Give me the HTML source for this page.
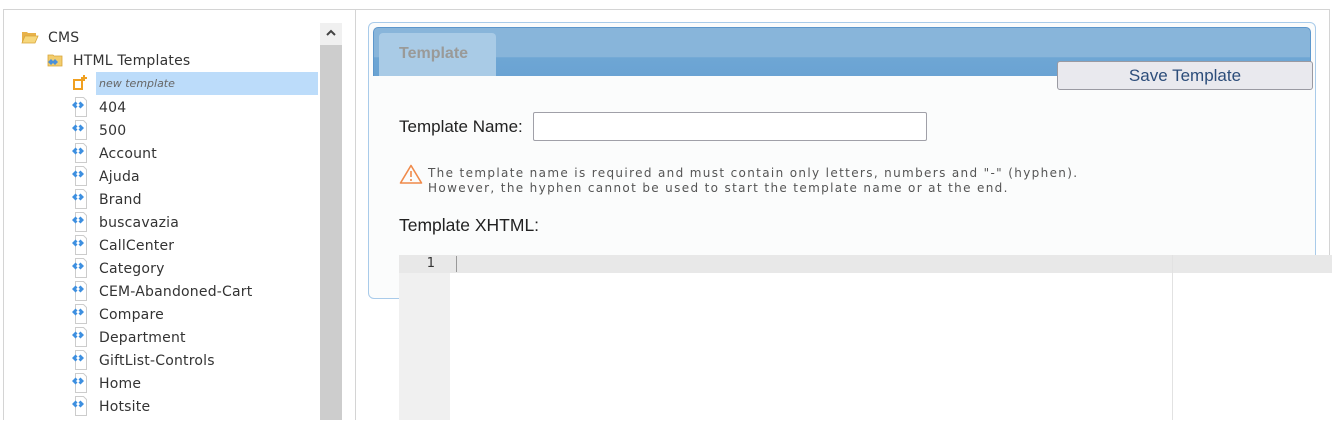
<!DOCTYPE html>
<html><head><meta charset="utf-8"><style>
*{margin:0;padding:0;box-sizing:border-box}
body{width:1340px;height:438px;background:#fff;position:relative;overflow:hidden;font-family:"DejaVu Sans","Liberation Sans",sans-serif}
.a{position:absolute}
.tree div{position:absolute;font-size:14px;letter-spacing:.2px;color:#333;height:23px;line-height:23px;white-space:nowrap}
</style></head><body>
<div class="a" style="left:3px;top:9px;width:1327px;height:411px;border:1px solid #d4d4d4;border-bottom:none"></div>
<div class="a" style="left:355px;top:9px;width:1px;height:411px;background:#d4d4d4"></div>
<div class="a" style="left:320px;top:23px;width:22px;height:397px;background:#cdcdcd"></div>
<div class="a" style="left:320px;top:23px;width:22px;height:22px;background:#f0f0f0"></div>
<svg class="a" style="left:325px;top:28px" width="12" height="10" viewBox="0 0 12 10"><path d="M2 7l4-4 4 4" fill="none" stroke="#444" stroke-width="2"/></svg>
<div class="a" style="left:4px;top:10px;width:316px;height:409px;overflow:hidden">
<div class="a" style="left:-4px;top:-10px;width:340px;height:440px">
<div class="tree">
<svg class="a" style="left:21px;top:30px" width="18" height="14" viewBox="0 0 18 14"><path d="M1 2h5l1 1h8v3H4L1 13z" fill="#e8b24a"/><path d="M4 6h13l-3 7H1z" fill="#f6d77c" stroke="#d9a53a" stroke-width=".8"/></svg>
<div style="left:48px;top:27px">CMS</div>
<svg class="a" style="left:46px;top:53px" width="18" height="15" viewBox="0 0 18 15"><path d="M2 2h5l1 1h8v10H2z" fill="#f2cd6e" stroke="#d9a53a" stroke-width=".8"/><path d="M2 9l3-3 3 3-3 3zM6 9l3-3 3 3-3 3z" fill="#4a90d9"/></svg>
<div style="left:73px;top:50px">HTML Templates</div>
<svg class="a" style="left:72px;top:75px" width="16" height="16" viewBox="0 0 16 16"><path d="M2 5h8v9H2z" fill="none" stroke="#f0a020" stroke-width="2"/><path d="M12 0v6M9 3h6" stroke="#f0a020" stroke-width="2"/></svg>
<div style="left:96px;top:72px;width:222px;background:#bcdcfa;font-style:italic;font-size:11px;letter-spacing:0;color:#666;padding-left:3px">new template</div>
</div>
<div class="tree" id="t"></div>
</div></div>
<script>
var n=["404","500","Account","Ajuda","Brand","buscavazia","CallCenter","Category","CEM-Abandoned-Cart","Compare","Department","GiftList-Controls","Home","Hotsite",""];
var h="";n.forEach(function(s,i){var y=108+i*23;
h+='<svg class="a" width="18" height="20" style="left:71px;top:'+(y-11)+'px" viewBox="0 0 18 20"><path d="M4.5 .5h8l3 3v16h-11z" fill="#fff" stroke="#ccc"/><path d="M1 8l3.5-3.5 2 2L5 8l1.5 1.5-2 2zM13 8l-3.5-3.5-2 2L9 8l-1.5 1.5 2 2z" fill="#3d8fe0"/></svg>';
if(s)h+='<div style="left:99px;top:'+(y-11)+'px">'+s+'</div>';});
document.getElementById('t').innerHTML=h;
</script>
<div class="a" style="left:368px;top:22px;width:948px;height:277px;border:1px solid #a9cbea;border-radius:6px;background:#fbfcfc"></div>
<div class="a" style="left:373px;top:27px;width:938px;height:49px;border-radius:5px 5px 0 0;background:linear-gradient(#88b5da 0%,#88b5da 60%,#6ea6d4 62%,#6aa3d3 100%);border:1px solid #5d97cc;border-bottom:none"></div>
<div class="a" style="left:379px;top:33px;width:117px;height:43px;background:#a9cbe6;border-radius:4px 4px 0 0;font:bold 16px 'Liberation Sans',sans-serif;color:#9a9a98;line-height:41px;padding-left:20px">Template</div>
<div class="a" style="left:1057px;top:61px;width:256px;height:29px;background:#e9e9ee;border:1px solid #9a9aa2;border-radius:3px;font:17px 'Liberation Sans',sans-serif;color:#2c4d7a;text-align:center;line-height:27px">Save Template</div>
<div class="a" style="left:399px;top:117px;font:17px 'Liberation Sans',sans-serif;color:#222">Template Name:</div>
<div class="a" style="left:533px;top:112px;width:394px;height:29px;border:1px solid #a0a0a8;border-radius:2px;background:#fff"></div>
<svg class="a" style="left:399px;top:164px" width="24" height="20" viewBox="0 0 24 20"><path d="M12 1.5L22.5 19h-21z" fill="none" stroke="#f08a4a" stroke-width="1.6" stroke-linejoin="round"/><path d="M12 7v6M12 15v2" stroke="#f08a4a" stroke-width="1.6"/></svg>
<div class="a" style="left:428px;top:166px;font:12px 'DejaVu Sans',sans-serif;color:#555;line-height:15px;letter-spacing:1.35px;white-space:nowrap">The template name is required and must contain only letters, numbers and "-" (hyphen).<br>However, the hyphen cannot be used to start the template name or at the end.</div>
<div class="a" style="left:399px;top:215px;font:17.5px 'Liberation Sans',sans-serif;color:#222">Template XHTML:</div>
<div class="a" style="left:399px;top:255px;width:933px;height:165px;background:#fff"></div>
<div class="a" style="left:399px;top:255px;width:51px;height:165px;background:#f0f0f0"></div>
<div class="a" style="left:399px;top:255px;width:933px;height:18px;background:#e8e8e8"></div>
<div class="a" style="left:399px;top:255px;width:36px;height:18px;font:13px 'DejaVu Sans',sans-serif;color:#333;text-align:right;line-height:18px">1</div>
<div class="a" style="left:456px;top:256px;width:1px;height:16px;background:#999"></div>
<div class="a" style="left:1172px;top:255px;width:1px;height:165px;background:#e2e2e2"></div>
</body></html>
